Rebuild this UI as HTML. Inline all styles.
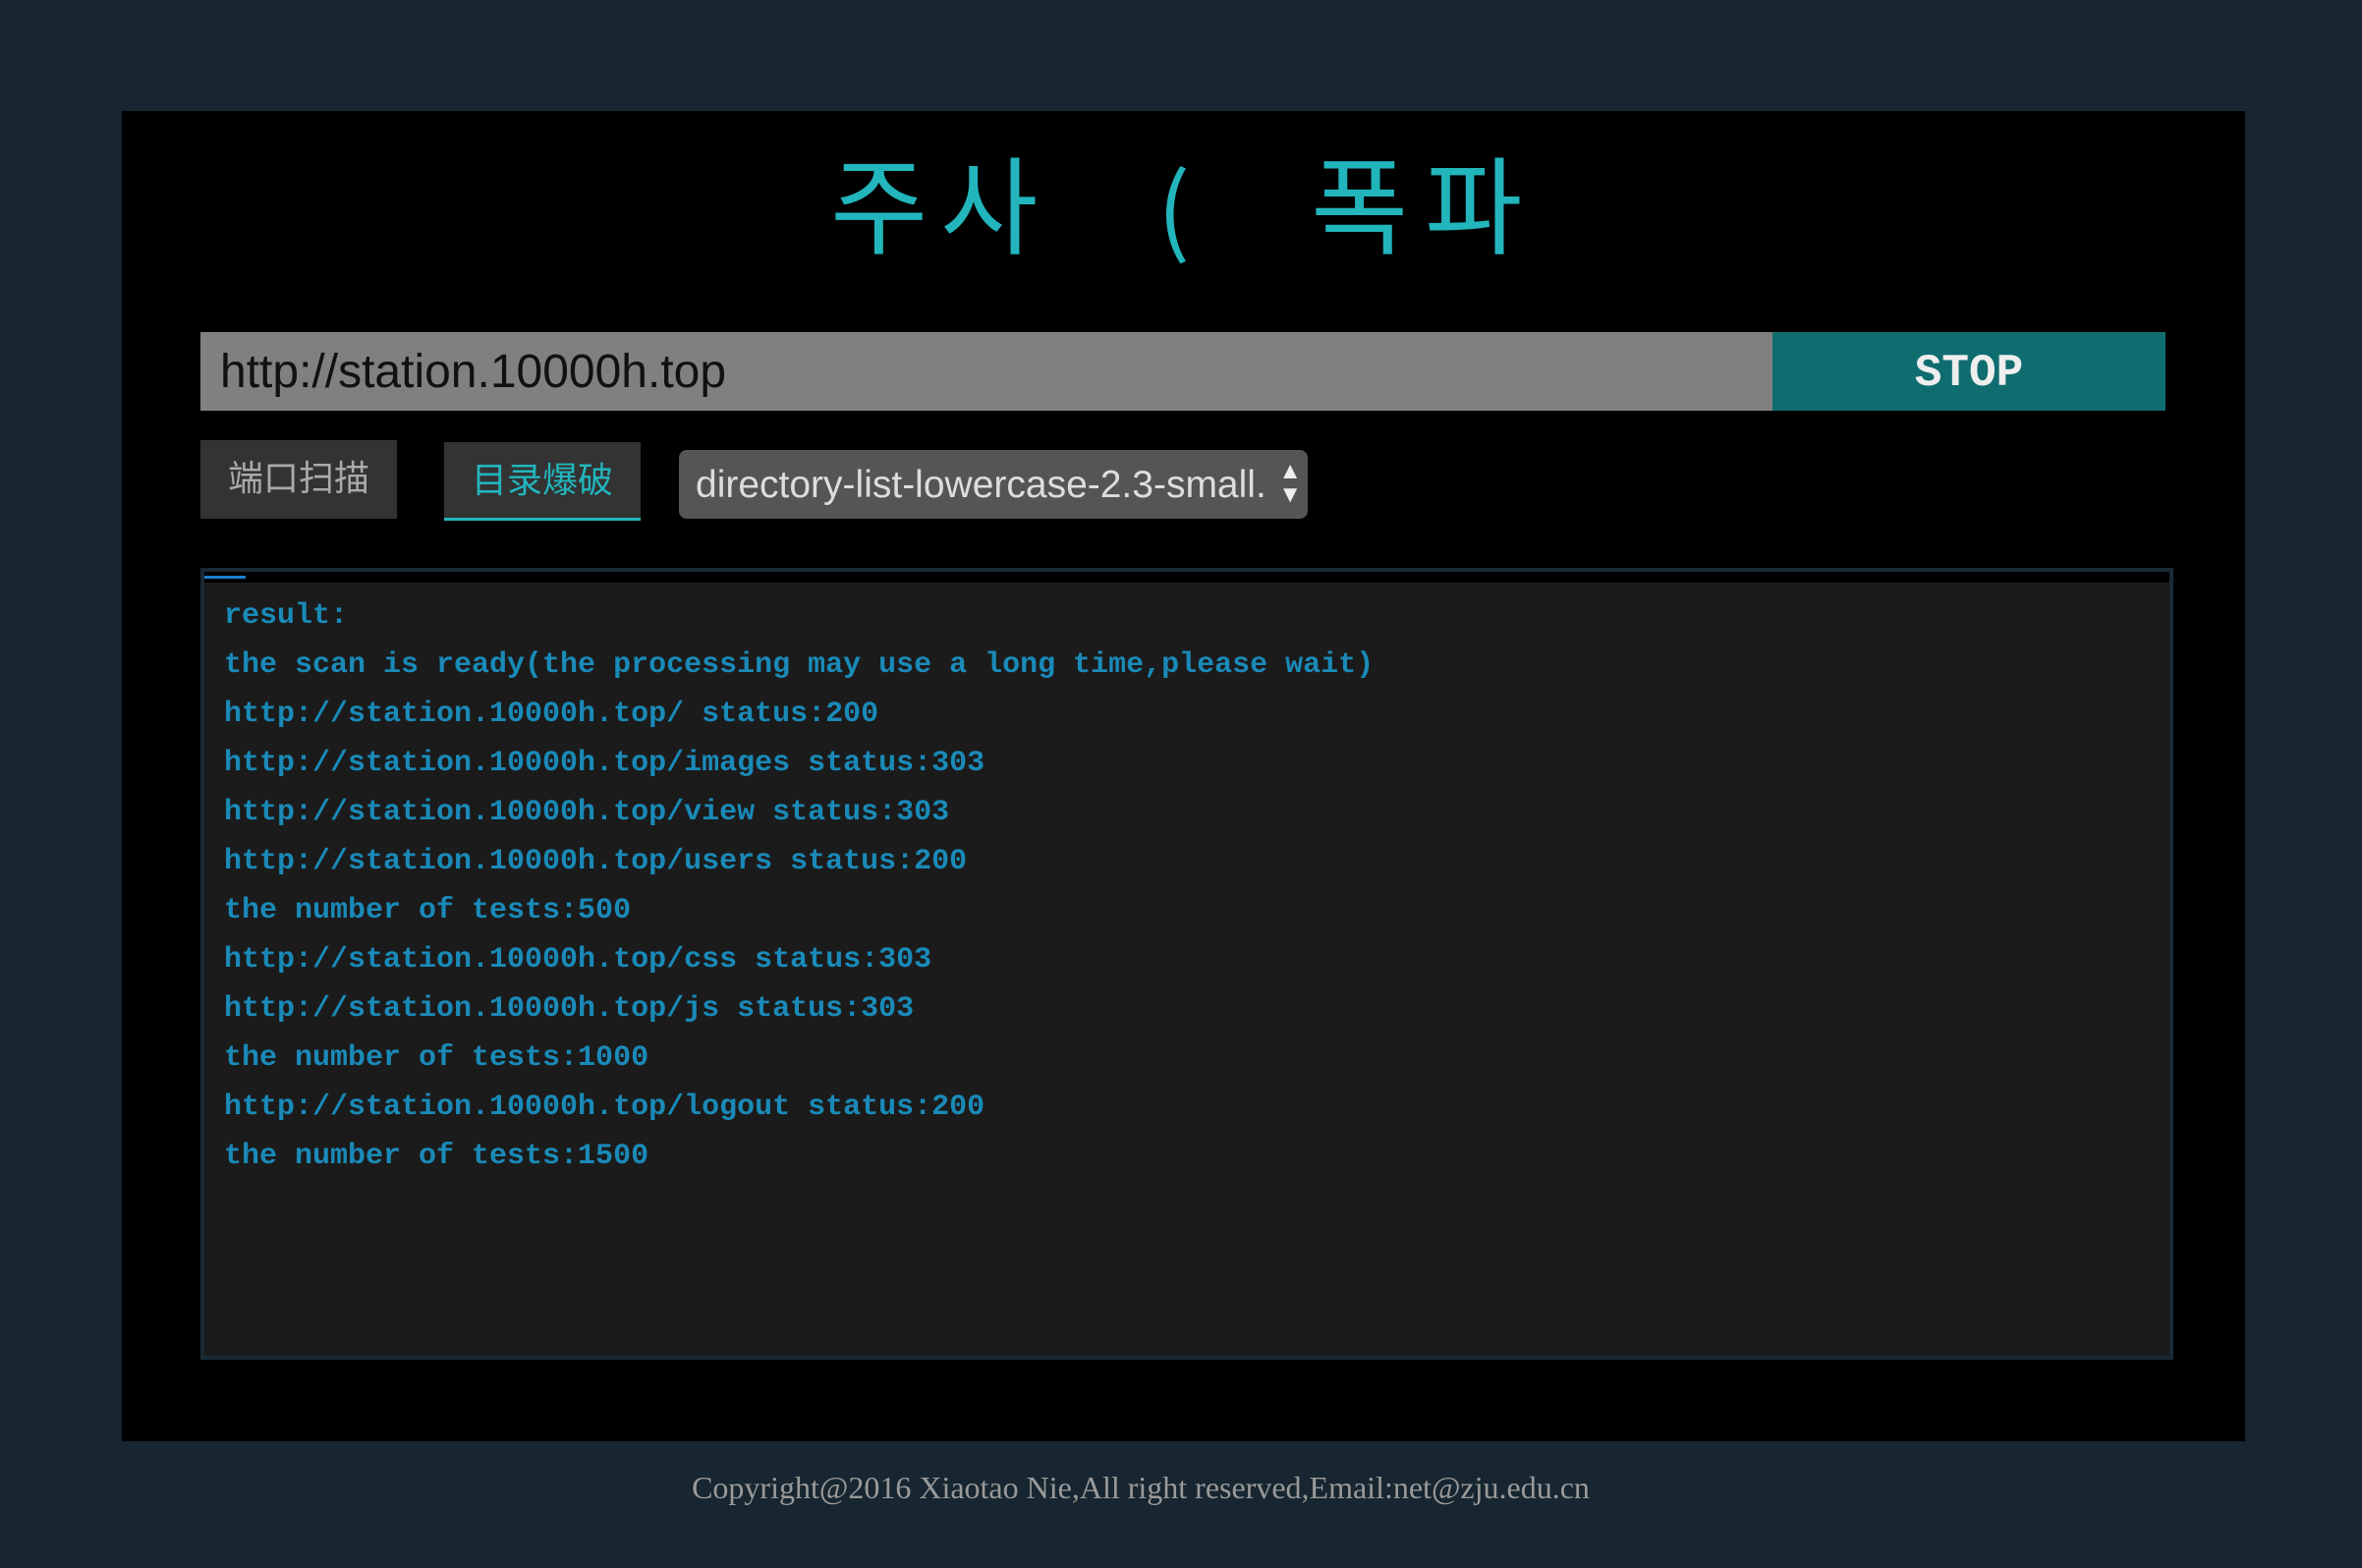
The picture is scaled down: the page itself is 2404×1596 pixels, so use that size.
<!DOCTYPE html>
<html><head><meta charset="utf-8"><style>
*{margin:0;padding:0;box-sizing:border-box}
body{width:2404px;height:1596px;background:#172630;position:relative;overflow:hidden;font-family:"Liberation Sans","Noto Sans CJK SC",sans-serif}
#panel{position:absolute;left:124px;top:113px;width:2161px;height:1354px;background:#000}
.t{position:absolute;color:#22b5bc;font-size:108px;line-height:1;font-family:"Noto Sans CJK KR","NanumGothic",sans-serif}
#inp{position:absolute;left:204px;top:338px;width:1600px;height:80px;background:#808080;color:#111;font-size:48px;line-height:82px;padding-left:20px}
#stop{position:absolute;left:1804px;top:338px;width:400px;height:80px;background:#0f6d70;color:#eee;font-family:"Liberation Mono",monospace;font-weight:bold;font-size:46px;line-height:84px;text-align:center}
.btn{position:absolute;background:#333;font-size:36px;text-align:center;font-family:"Liberation Sans","Noto Sans CJK SC",sans-serif}
#sel{position:absolute;left:691px;top:458px;width:640px;height:70px;background:#555;border-radius:8px;color:#ddd;font-size:39px;line-height:72px;padding-left:17px;white-space:nowrap;overflow:hidden}
#seltxt{position:absolute;left:17px;top:0;width:578px;overflow:hidden;white-space:nowrap}
#box{position:absolute;left:204px;top:578px;width:2008px;height:806px;border:4px solid #1a2a35;background:#1b1b1b}
#strip{position:absolute;left:0;top:0;right:0;height:11px;background:#000}
#res{position:absolute;left:20px;top:20px;font-family:"Liberation Mono",monospace;font-weight:bold;font-size:30px;line-height:50px;color:#1a8ab8;white-space:pre}
#foot{position:absolute;left:-41px;width:2404px;top:1496px;text-align:center;font-family:"Liberation Serif",serif;font-size:32px;color:#9a9a9a}
</style></head><body>
<div id="panel"></div>
<span class="t" style="left:845px;top:150px">주</span>
<span class="t" style="left:957px;top:150px">사</span>
<span class="t" style="left:1178px;top:158px;font-size:98px">(</span>
<span class="t" style="left:1334px;top:150px">폭</span>
<span class="t" style="left:1450px;top:150px">파</span>
<div id="inp">http://station.10000h.top</div>
<div id="stop">STOP</div>
<div class="btn" style="left:204px;top:448px;width:200px;height:80px;line-height:78px;color:#aaa">端口扫描</div>
<div class="btn" style="left:452px;top:450px;width:200px;height:80px;line-height:78px;color:#22b5bc;border-bottom:3px solid #22b5bc">目录爆破</div>
<div id="sel"><div id="seltxt">directory-list-lowercase-2.3-small.txt</div><span style="position:absolute;right:6px;top:10px;font-size:24px;line-height:24px;color:#eee">▲<br>▼</span></div>
<div id="box"><div id="strip"></div><div style="position:absolute;left:0;top:4px;width:42px;height:3px;background:#1a7fd0"></div>
<div id="res">result:
the scan is ready(the processing may use a long time,please wait)
http://station.10000h.top/ status:200
http://station.10000h.top/images status:303
http://station.10000h.top/view status:303
http://station.10000h.top/users status:200
the number of tests:500
http://station.10000h.top/css status:303
http://station.10000h.top/js status:303
the number of tests:1000
http://station.10000h.top/logout status:200
the number of tests:1500</div></div>
<div id="foot">Copyright@2016 Xiaotao Nie,All right reserved,Email:net@zju.edu.cn</div>
</body></html>
